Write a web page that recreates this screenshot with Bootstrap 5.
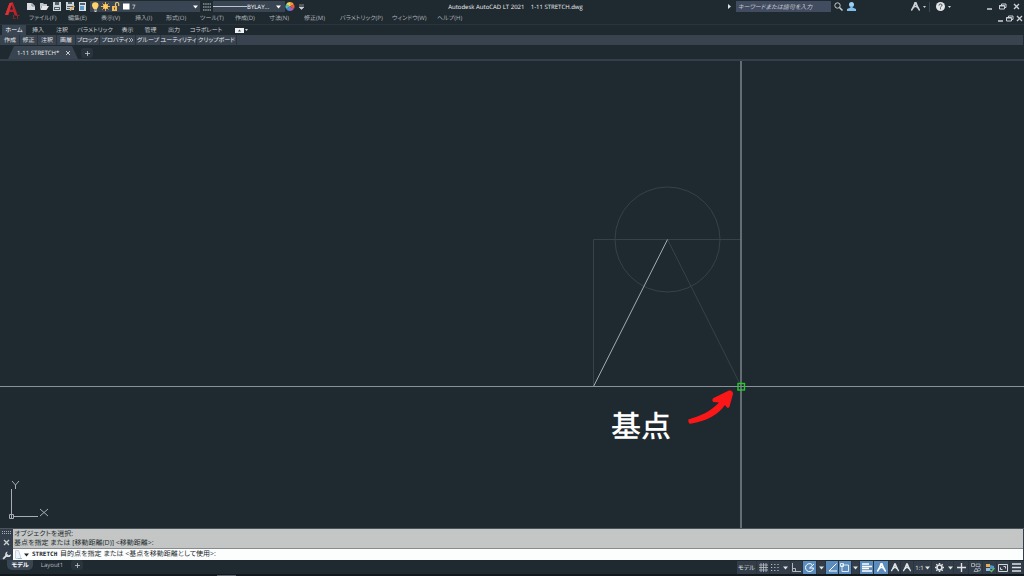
<!DOCTYPE html>
<html lang="ja">
<head>
<meta charset="utf-8">
<meta name="viewport" content="width=device-width, initial-scale=1">
<title>Autodesk AutoCAD LT 2021 - 1-11 STRETCH.dwg</title>
<link href="https://cdn.jsdelivr.net/npm/bootstrap@5.3.0/dist/css/bootstrap.min.css" rel="stylesheet">
<style>
:root{--ground:#1f2930;--panel:#3a4553;--ink:#ccd0d4;--soft:#b0b6bb;--on:#5a8dbd}
body{background:var(--ground);color:var(--ink);font-family:"Open Sans","Noto Sans CJK JP",sans-serif;font-size:6px;line-height:10px;font-feature-settings:"palt";text-rendering:geometricPrecision;white-space:nowrap}
svg{display:block;flex:none}
a{color:inherit;text-decoration:none}
button,select,input{font:inherit;font-feature-settings:inherit;text-rendering:inherit;color:inherit;background:none;border:0;padding:0;margin:0;border-radius:0;line-height:10px}
button{display:flex;align-items:center;justify-content:center}
select{appearance:none;min-width:0}
.app-head{border-bottom:1px solid #29343e;height:25px}
.logo-cell{width:26px}
.title-bar{height:13px}
.quick{gap:3px;margin-right:2px}
.box{background:var(--panel);height:11px}
.layer-box{width:110px;gap:1px;padding:0 2px 0 1px;color:#fff}
.layer-props{padding:0 2px 0 3px}
.type-box{width:72px;color:#fff}
.doc-title{color:#f2f3f4}
.find{width:95px;height:11px;background:#414c60;font-style:italic;padding-left:2px}
.find::placeholder{color:#c5cad1;opacity:1}
.account{gap:4px;width:80px;padding-left:3px}
.help-group{gap:2px;width:76px}
.win-buttons{gap:6px}
.doc-buttons{gap:2px;padding-right:1px}
.split{width:1px;height:10px;background:#3b4651}
.menu-row{display:grid;grid-template-columns:39px 33px 34px 31px 34px 35px 34px 35px 36px 52px 45px 30px;color:var(--soft);padding-left:3px;height:11px}
.ribbon-tabs{display:grid;grid-template-columns:24px 24px 24px 42px 23px 23px 24px 40px 32px;height:10px;padding-left:2px;text-align:center}
.ribbon-tabs .active{background:var(--panel);color:#fff}
.panel-row{display:grid;grid-template-columns:19px 18px 19px 19px 24px 36px 25px 36px 40px;background:#38434f;height:10px;color:#e4e7e9;margin-right:1px;padding-left:1px}
.panel-row button{border-right:1px solid #2a343f;gap:1px}
.file-tabs{height:16px;border-bottom:2px solid #33404c;padding:1px 0 0 8px}
.file-tab{background:#38444f;width:70px;height:13px;color:#f2f3f4;clip-path:polygon(6px 0,64px 0,70px 100%,0 100%);padding:0 7px 0 9px}
.plus{width:12px;height:10px;margin-left:3px;background:#29343d;border-radius:3px}
.file-tabs .plus{margin-top:2px}
.stage{min-height:0}
.stage>svg.drawing{width:100%;height:100%}
.ucs{left:5px;bottom:1px}
.note-text{font-family:"Noto Sans CJK JP",sans-serif;font-size:30px;font-weight:500;fill:#fff}
.cmd{border-top:1px solid #4a545d;background:#333e4a;padding-right:1px}
.cmd-side{width:13px}
.history{background:#c3c6c5;color:#20262a;font-size:7px;line-height:9px;height:20px;border-bottom:1px solid #858b8e;padding:1px 0 0 1px}
.prompt{background:#fcfdfd;color:#20262a;font-size:7px;height:11px;padding-left:2px;gap:2px}
.prompt strong{font-family:"DejaVu Sans Mono","Noto Sans CJK JP",monospace;font-size:6px;margin:0 1px}
.foot{height:16px;border-bottom:2px solid #12181c}
.sheet-nav{padding-left:7px;gap:3px}
.sheet-nav .plus{margin-left:0}
.sheet{width:32px;height:10px;color:#b6bcc1}
.sheet.active{background:var(--panel);color:#fff;border-radius:0 0 5px 5px;width:26px;font-weight:600}
.status{display:grid;grid-template-columns:20px 13px 11px 10px 12px 14px 9px 13px 13px 8px 14px 15px 12px 13px 18px 15px 7px 15px 14px 14px 13px 14px;background:#323d49;height:13px;margin-top:1px;color:#e0e3e5}
.status button{height:13px;border-right:1px solid #2a343e;gap:1px}
.status .on{background:var(--on);color:#fff}
.bottom-mark{left:217px;bottom:0;width:19px;height:1px;background:#59626a}
</style>
</head>
<body class="d-flex flex-column vh-100 overflow-hidden">
<svg width="0" height="0" class="position-absolute" aria-hidden="true">
<defs>
<symbol id="down" viewBox="0 0 5 4"><path d="M0 .5h5L2.500 3.500z" fill="currentColor"/></symbol>
<symbol id="dot" viewBox="0 0 5 4"><path d="M1 1h3L2.500 3z" fill="currentColor"/></symbol>
<symbol id="cross" viewBox="0 0 7 7"><path d="M1 1l5 5M6 1L1 6" stroke="currentColor" stroke-width="1.300"/></symbol>
<symbol id="add" viewBox="0 0 10 10"><path d="M5 0v10M0 5h10" stroke="currentColor" stroke-width="1.500"/></symbol>
<symbol id="restore" viewBox="0 0 8 7"><path d="M2.500 2.500V1H7v3.500H5.500M.5 2.500h5V6h-5zM.5 3h5" fill="none" stroke="currentColor"/></symbol>
<symbol id="mini" viewBox="0 0 6 7"><path d="M0 6h5" stroke="currentColor" stroke-width="1.500"/></symbol>
<symbol id="compass" viewBox="0 0 9 9"><path d="M4.500 0L2.200 6M4.500 0L6.800 6" stroke="currentColor" stroke-width="1.900" fill="none"/><path d="M3 4.500h3M.3 8.500L2.500 5M8.700 8.500L6.500 5" stroke="currentColor" stroke-width="1.500"/></symbol>
</defs>
</svg>

<header class="app-head d-flex">
  <button class="logo-cell align-items-start" aria-label="アプリケーション メニュー">
    <svg width="20" height="22" viewBox="0 0 20 22"><path d="M2 15L6.500 3l3.500-.5L14.500 15l-3 .5L10.500 12H6.500l-1 3zM7 9.500h3L8.500 5.500z" fill="#b5242b"/><path d="M6.500 3l3.500-.5L8 5.500 5 15H2z" fill="#d93236"/><path d="M10.500 15v3.500h2M12.500 15.500h4M14.500 15v4" stroke="#8f2429" fill="none"/></svg>
  </button>
  <div class="flex-grow-1">
    <div class="title-bar d-flex align-items-center">
      <div class="quick d-flex align-items-center">
        <button aria-label="新規"><svg width="10" height="9" viewBox="0 0 10 9"><path d="M1 1h5l3 3v4H1z" fill="#dadde0"/><path d="M6 1v3h3" fill="none" stroke="#7c8790"/></svg></button>
        <button aria-label="開く"><svg width="10" height="9" viewBox="0 0 10 9"><path d="M1 8V1h3l1 1h3v2H3z" fill="#bfc5ca"/><path d="M3 4h7L7.500 8H1.500z" fill="#e5e7e9"/></svg></button>
        <button aria-label="上書き保存"><svg width="10" height="9" viewBox="0 0 10 9"><path d="M1 0h8v9H1z" fill="#cdd2d6"/><path d="M3 0h4v3H3zM2 5h6v3H2z" fill="#52606c"/><path d="M3 6h4v1H3z" fill="#dce0e2"/></svg></button>
        <button aria-label="名前を付けて保存"><svg width="10" height="9" viewBox="0 0 10 9"><path d="M1 0h8v8H1z" fill="#cdd2d6"/><path d="M3 0h4v2H3zM2 4h6v1H2zM2 6h3v1H2z" fill="#52606c"/><path d="M5 8.500L9.500 4" stroke="#e2a850" stroke-width="1.500"/></svg></button>
        <button aria-label="印刷"><svg width="10" height="9" viewBox="0 0 10 9"><path d="M1 0h7v9H1z" fill="#dce1e5"/><path d="M2 1h5v2H2z" fill="#4b6478"/><path d="M2 4h4v4H2z" fill="#5e9dca"/></svg></button>
      </div>
      <div class="box layer-box d-flex align-items-center">
        <svg width="9" height="10" viewBox="0 0 9 10"><path d="M2.500 7C2.500 6 1 5 1 3.500a3.200 3.200 0 016.500 0C7.500 5 6 6 6 7z" fill="#ffd36a"/><path d="M3 8h3M3.500 9.500h2" stroke="#d1d3d3"/></svg>
        <svg width="9" height="9" viewBox="0 0 9 9"><path d="M4.500 0v9M0 4.500h9M1.500 1.500l6 6M7.500 1.500l-6 6" stroke="#f3af49"/><circle cx="4.500" cy="4.500" r="2.500" fill="#ffcc62"/></svg>
        <svg width="9" height="9" viewBox="0 0 9 9"><path d="M1 4h5v5H1z" fill="#f3bb58"/><path d="M4.500 4V2a1.600 1.600 0 013.200 0v2" fill="none" stroke="#e8c276" stroke-width="1.200"/><path d="M3 5.500h1v2H3z" fill="#5a4a30"/></svg>
        <svg width="10" height="7" viewBox="0 0 10 7"><rect x="2" y=".5" width="6.500" height="6" fill="#fff"/></svg>
        <select class="flex-grow-1 ps-0" aria-label="画層"><option>7</option></select>
        <svg width="5" height="4"><use href="#down"/></svg>
      </div>
      <button class="layer-props" aria-label="画層プロパティ"><svg width="8" height="8" viewBox="0 0 8 8"><path d="M0 1h8M0 4h8M0 7h8" stroke="#8b949b" stroke-width="1.500" stroke-dasharray="1.500 .7"/></svg></button>
      <div class="box type-box d-flex align-items-center">
        <svg width="34" height="3" viewBox="0 0 34 3"><path d="M0 1.500h34" stroke="#bcc3c9"/></svg>
        <select class="flex-grow-1 ps-0" aria-label="線種"><option>BYLAY...</option></select>
        <svg width="5" height="4" class="me-1"><use href="#down"/></svg>
      </div>
      <button aria-label="オブジェクトの色"><svg width="10" height="9" viewBox="0 0 9 9"><path d="M4.500 4.500V0A4.500 4.500 0 018.400 2.200z" fill="#f39a3d"/><path d="M4.500 4.500L8.400 2.200a4.500 4.500 0 010 4.600z" fill="#e8573d"/><path d="M4.500 4.500l3.900 2.300A4.500 4.500 0 014.500 9z" fill="#a45dbb"/><path d="M4.500 4.500V9A4.500 4.500 0 01.6 6.800z" fill="#4c87d9"/><path d="M4.500 4.500L.6 6.800a4.500 4.500 0 010-4.600z" fill="#54c0bc"/><path d="M4.500 4.500L.6 2.200A4.500 4.500 0 014.500 0z" fill="#e2d65c"/></svg></button>
      <button aria-label="カスタマイズ" class="ps-1"><svg width="5" height="6" viewBox="0 0 5 6"><path d="M0 1h5M0 3h5L2.500 5.500z" fill="currentColor" stroke="currentColor" stroke-width=".6"/></svg></button>
      <div class="doc-title flex-grow-1 text-center">Autodesk AutoCAD LT 2021 &nbsp;&nbsp; 1-11 STRETCH.dwg</div>
      <svg width="5" height="5" viewBox="0 0 5 5" class="me-1"><path d="M1 0l3 2.500L1 5z" fill="#dfe2e4"/></svg>
      <input class="find" type="search" placeholder="キーワードまたは語句を入力" aria-label="検索">
      <div class="account d-flex align-items-center">
        <button aria-label="検索実行"><svg width="9" height="9" viewBox="0 0 9 9"><circle cx="3.500" cy="3.500" r="2.700" fill="none" stroke="#c7ccd0"/><path d="M5.500 5.500L8.500 8.500" stroke="#c7ccd0" stroke-width="1.500"/></svg></button>
        <button aria-label="サインイン"><svg width="9" height="9" viewBox="0 0 9 9"><circle cx="4.500" cy="2.500" r="2.500" fill="#9bd1f5"/><path d="M0 9V7l3.500-1.500V4h2v1.500L9 7v2z" fill="#7fbfea"/></svg></button>
      </div>
      <div class="help-group d-flex align-items-center">
        <button aria-label="アプリ"><svg width="9" height="9"><use href="#compass"/></svg></button>
        <svg width="5" height="4"><use href="#dot"/></svg><span class="split"></span>
        <button aria-label="ヘルプ" class="ps-1"><svg width="9" height="9" viewBox="0 0 9 9"><circle cx="4.500" cy="4.500" r="4.500" fill="#e3e5e7"/><path d="M3 3.500C3 1.500 6 1.500 6 3.300 6 4.400 4.500 4.300 4.500 5.500M4.500 6.300v1" fill="none" stroke="#36424c"/></svg></button>
        <svg width="5" height="4"><use href="#dot"/></svg>
      </div>
      <div class="win-buttons d-flex align-items-center pe-1">
        <button aria-label="最小化"><svg width="6" height="7"><use href="#mini"/></svg></button>
        <button aria-label="元に戻す"><svg width="8" height="7"><use href="#restore"/></svg></button>
        <button aria-label="閉じる"><svg width="7" height="7"><use href="#cross"/></svg></button>
      </div>
    </div>
    <div class="d-flex justify-content-between">
      <nav class="menu-row">
        <a href="#">ファイル(F)</a><a href="#">編集(E)</a><a href="#">表示(V)</a><a href="#">挿入(I)</a><a href="#">形式(O)</a><a href="#">ツール(T)</a><a href="#">作成(D)</a><a href="#">寸法(N)</a><a href="#">修正(M)</a><a href="#">パラメトリック(P)</a><a href="#">ウィンドウ(W)</a><a href="#">ヘルプ(H)</a>
      </nav>
      <div class="doc-buttons d-flex align-items-center">
        <button aria-label="図面を最小化"><svg width="6" height="7"><use href="#mini"/></svg></button>
        <button aria-label="図面を元に戻す"><svg width="8" height="7"><use href="#restore"/></svg></button>
        <button aria-label="図面を閉じる"><svg width="7" height="7"><use href="#cross"/></svg></button>
      </div>
    </div>
  </div>
</header>

<nav class="ribbon-tabs">
  <a href="#" class="active">ホーム</a><a href="#">挿入</a><a href="#">注釈</a><a href="#">パラメトリック</a><a href="#">表示</a><a href="#">管理</a><a href="#">出力</a><a href="#">コラボレート</a>
  <button aria-label="リボン表示"><svg width="9" height="5" viewBox="0 0 9 5"><path d="M0 0h9v5H0z" fill="#eef0f1"/><path d="M3 3.500L4.500 1.500 6 3.500z" fill="#3a4553"/></svg><svg width="5" height="4"><use href="#dot"/></svg></button>
</nav>
<div class="panel-row">
  <button>作成</button><button>修正</button><button>注釈</button><button>画層</button><button>ブロック</button><button>プロパティ<svg width="4" height="4" viewBox="0 0 4 4"><path d="M0 0l2 2-2 2M2 0l2 2-2 2" fill="none" stroke="#bdc3c8" stroke-width=".8"/></svg></button><button>グループ</button><button>ユーティリティ</button><button>クリップボード</button>
</div>
<div class="file-tabs d-flex">
  <div class="file-tab d-flex align-items-center justify-content-between"><a href="#">1-11 STRETCH*</a><button aria-label="タブを閉じる"><svg width="6" height="6" viewBox="0 0 6 6"><path d="M1 1l4 4M5 1L1 5" stroke="#c3c9ce"/></svg></button></div>
  <button class="plus" aria-label="新しい図面"><svg width="5" height="5"><use href="#add"/></svg></button>
</div>

<main class="stage flex-grow-1 position-relative">
  <svg class="drawing" viewBox="0 0 1024 467" preserveAspectRatio="xMidYMid slice" fill="none">
    <g stroke="#36414a"><path d="M741 178.500H593.500V325M667.500 178.500L741 325"/><circle cx="667.500" cy="178.500" r="52.500"/></g>
    <path d="M593.500 325.500L667.500 178.500" stroke="#a6acb0"/>
    <path d="M0 325.500H1024" stroke="#8b9296"/>
    <path d="M741 0V467" stroke="#7c8489" stroke-width="1.500"/>
    <rect x="738" y="322.500" width="6.500" height="6.500" stroke="#22cc29" stroke-width="1.400"/>
    <path d="M688.300 358.500Q688 362.500 690.500 362.800C707 360 718 354 725 344L726.500 346Q728.500 348 729.500 345.500L733 333Q733 329 729 329.500L713.500 337Q711.500 338.500 713 341L719 341.500C711 350 701 355 688.300 358.500Z" fill="#fb1718"/>
    <text class="note-text" x="611" y="376">基点</text>
  </svg>
  <svg class="ucs position-absolute" width="46" height="46" viewBox="0 0 46 46" fill="none" stroke="#a7adb1"><path d="M6.500 8v30M9 35.500h24M4.500 33.500h4v4h-4z"/><path d="M7 0l3.500 4L14 0M10.500 4v4M35 28l8 7M43 28l-8 7"/></svg>
</main>

<section class="cmd d-flex">
  <div class="cmd-side d-flex flex-column align-items-center justify-content-between">
    <svg width="9" height="5" viewBox="0 0 9 5"><path d="M0 2.500h9M0 4.500h9" stroke="#a6adb3" stroke-dasharray="1 1"/></svg>
    <button aria-label="コマンドラインを閉じる"><svg width="7" height="7"><use href="#cross"/></svg></button>
    <button aria-label="設定"><svg width="9" height="9" viewBox="0 0 8 8"><path d="M1 7l4-4" stroke="#e0e3e5" stroke-width="1.500"/><path d="M5 .5L4 3l1 1 3-1c0 2-2 3-4 2L3 4c-.5-2 .5-3 2-3.500z" fill="#e0e3e5"/></svg></button>
  </div>
  <div class="flex-grow-1">
    <div class="history"><div>オブジェクトを選択:</div><div>基点を指定 または [移動距離(D)] &lt;移動距離&gt;:</div></div>
    <div class="prompt d-flex align-items-center">
      <svg width="7" height="9" viewBox="0 0 7 9"><path d="M.5.5h3l2 6v2h-5z" fill="#eef5fa" stroke="#c6d5df"/><path d="M3 8.500h4" stroke="#8fc0df"/></svg>
      <svg width="5" height="4"><use href="#down"/></svg>
      <label for="command"><strong>STRETCH</strong> 目的点を指定 または &lt;基点を移動距離として使用&gt;:</label>
      <input id="command" type="text" class="flex-grow-1">
    </div>
  </div>
</section>

<footer class="foot d-flex justify-content-between">
  <nav class="sheet-nav d-flex">
    <a href="#" class="sheet active text-center">モデル</a><a href="#" class="sheet text-center">Layout1</a>
    <button class="plus" aria-label="新しいレイアウト"><svg width="5" height="5"><use href="#add"/></svg></button>
  </nav>
  <div class="status">
    <button>モデル</button>
    <button aria-label="グリッド"><svg width="9" height="9" viewBox="0 0 9 9"><path d="M2 0v9M4.500 0v9M7 0v9M0 2h9M0 4.500h9M0 7h9" stroke="#bbc1c6" stroke-width=".8"/></svg></button>
    <button class="border-0" aria-label="スナップ"><svg width="9" height="9" viewBox="0 0 9 9"><path d="M0 1.500h9M0 4.500h9M0 7.500h9" stroke="#bbc1c6" stroke-width="1.200" stroke-dasharray="1.200 2"/></svg></button>
    <button aria-label="スナップ設定"><svg width="5" height="4"><use href="#down"/></svg></button>
    <button aria-label="直交モード"><svg width="9" height="9" viewBox="0 0 9 9"><path d="M.5 0v8.500H9M.5 5.500h3v3" fill="none" stroke="#b0b7bd"/></svg></button>
    <button class="on" aria-label="極トラッキング"><svg width="10" height="9" viewBox="0 0 10 9"><path d="M7 1.500A4 4 0 108.500 5H4.500L9 1" fill="none" stroke="currentColor"/></svg></button>
    <button aria-label="極設定"><svg width="5" height="4"><use href="#down"/></svg></button>
    <button class="on" aria-label="オブジェクト スナップ トラッキング"><svg width="9" height="9" viewBox="0 0 9 9"><path d="M8.500.5L1 8h8" fill="none" stroke="currentColor"/></svg></button>
    <button class="on" aria-label="オブジェクト スナップ"><svg width="10" height="10" viewBox="0 0 10 10"><path d="M2 2h6.500v6.500H2zM.5.500h3v3h-3z" fill="none" stroke="currentColor" stroke-width=".8"/></svg></button>
    <button aria-label="スナップ種類"><svg width="5" height="4"><use href="#down"/></svg></button>
    <button class="on" aria-label="線の太さ"><svg width="10" height="9" viewBox="0 0 10 9"><path d="M0 1h7M0 3.500h10M0 5.500h7M0 8h10" stroke="currentColor" stroke-width="1.300"/></svg></button>
    <button class="on" aria-label="注釈の表示"><svg width="9" height="9"><use href="#compass"/></svg></button>
    <button aria-label="尺度の追加"><svg width="8" height="9"><use href="#compass"/></svg></button>
    <button aria-label="注釈尺度"><svg width="8" height="9"><use href="#compass"/></svg></button>
    <button>1:1<svg width="5" height="4"><use href="#down"/></svg></button>
    <button class="border-0" aria-label="ワークスペース"><svg width="9" height="9" viewBox="0 0 9 9"><circle cx="4.500" cy="4.500" r="2.500" fill="none" stroke="#e1e4e6" stroke-width="1.700"/><path d="M4.500 0v1.500M4.500 7.500V9M0 4.500h1.500M7.500 4.500H9M1.300 1.300l1 1M6.700 6.700l1 1M1.300 7.700l1-1M6.700 2.300l1-1" stroke="#e1e4e6" stroke-width="1.500"/></svg></button>
    <button aria-label="ワークスペース選択"><svg width="5" height="4"><use href="#down"/></svg></button>
    <button aria-label="注釈モニター"><svg width="9" height="9"><use href="#add"/></svg></button>
    <button aria-label="選択表示"><svg width="10" height="9" viewBox="0 0 10 9"><path d="M.5.500h3v3h-3zM5 1h4v2.500H5zM3 8.500l2-3.500 2 3.500z" fill="none" stroke="#aeb6bd" stroke-width=".8"/><circle cx="8" cy="6.500" r="1.500" fill="none" stroke="#aeb6bd" stroke-width=".8"/></svg></button>
    <button aria-label="グラフィックス パフォーマンス"><svg width="10" height="10" viewBox="0 0 10 10"><path d="M1 1h4v3H1z" fill="#e7ad52"/><path d="M5 2l4 1v3H5z" fill="#4d94d0"/><path d="M1 5h4v3H1z" fill="#8fbce0"/><path d="M5 7l1.500 1.500L9.500 5" fill="none" stroke="#5eba65" stroke-width="1.500"/></svg></button>
    <button aria-label="フルスクリーン"><svg width="10" height="8" viewBox="0 0 10 8"><path d="M.5.500h9v7h-9zM5.500 2.500h2v2M4.500 5.500h-2v-2" fill="none" stroke="#d2d6da"/></svg></button>
    <button aria-label="カスタマイズ"><svg width="9" height="9" viewBox="0 0 9 9"><path d="M0 1h9M0 4.500h9M0 8h9" stroke="#dfe2e4" stroke-width="1.300"/></svg></button>
  </div>
</footer>
<span class="bottom-mark position-absolute"></span>
<script src="https://cdn.jsdelivr.net/npm/bootstrap@5.3.0/dist/js/bootstrap.bundle.min.js"></script>
</body>
</html>
